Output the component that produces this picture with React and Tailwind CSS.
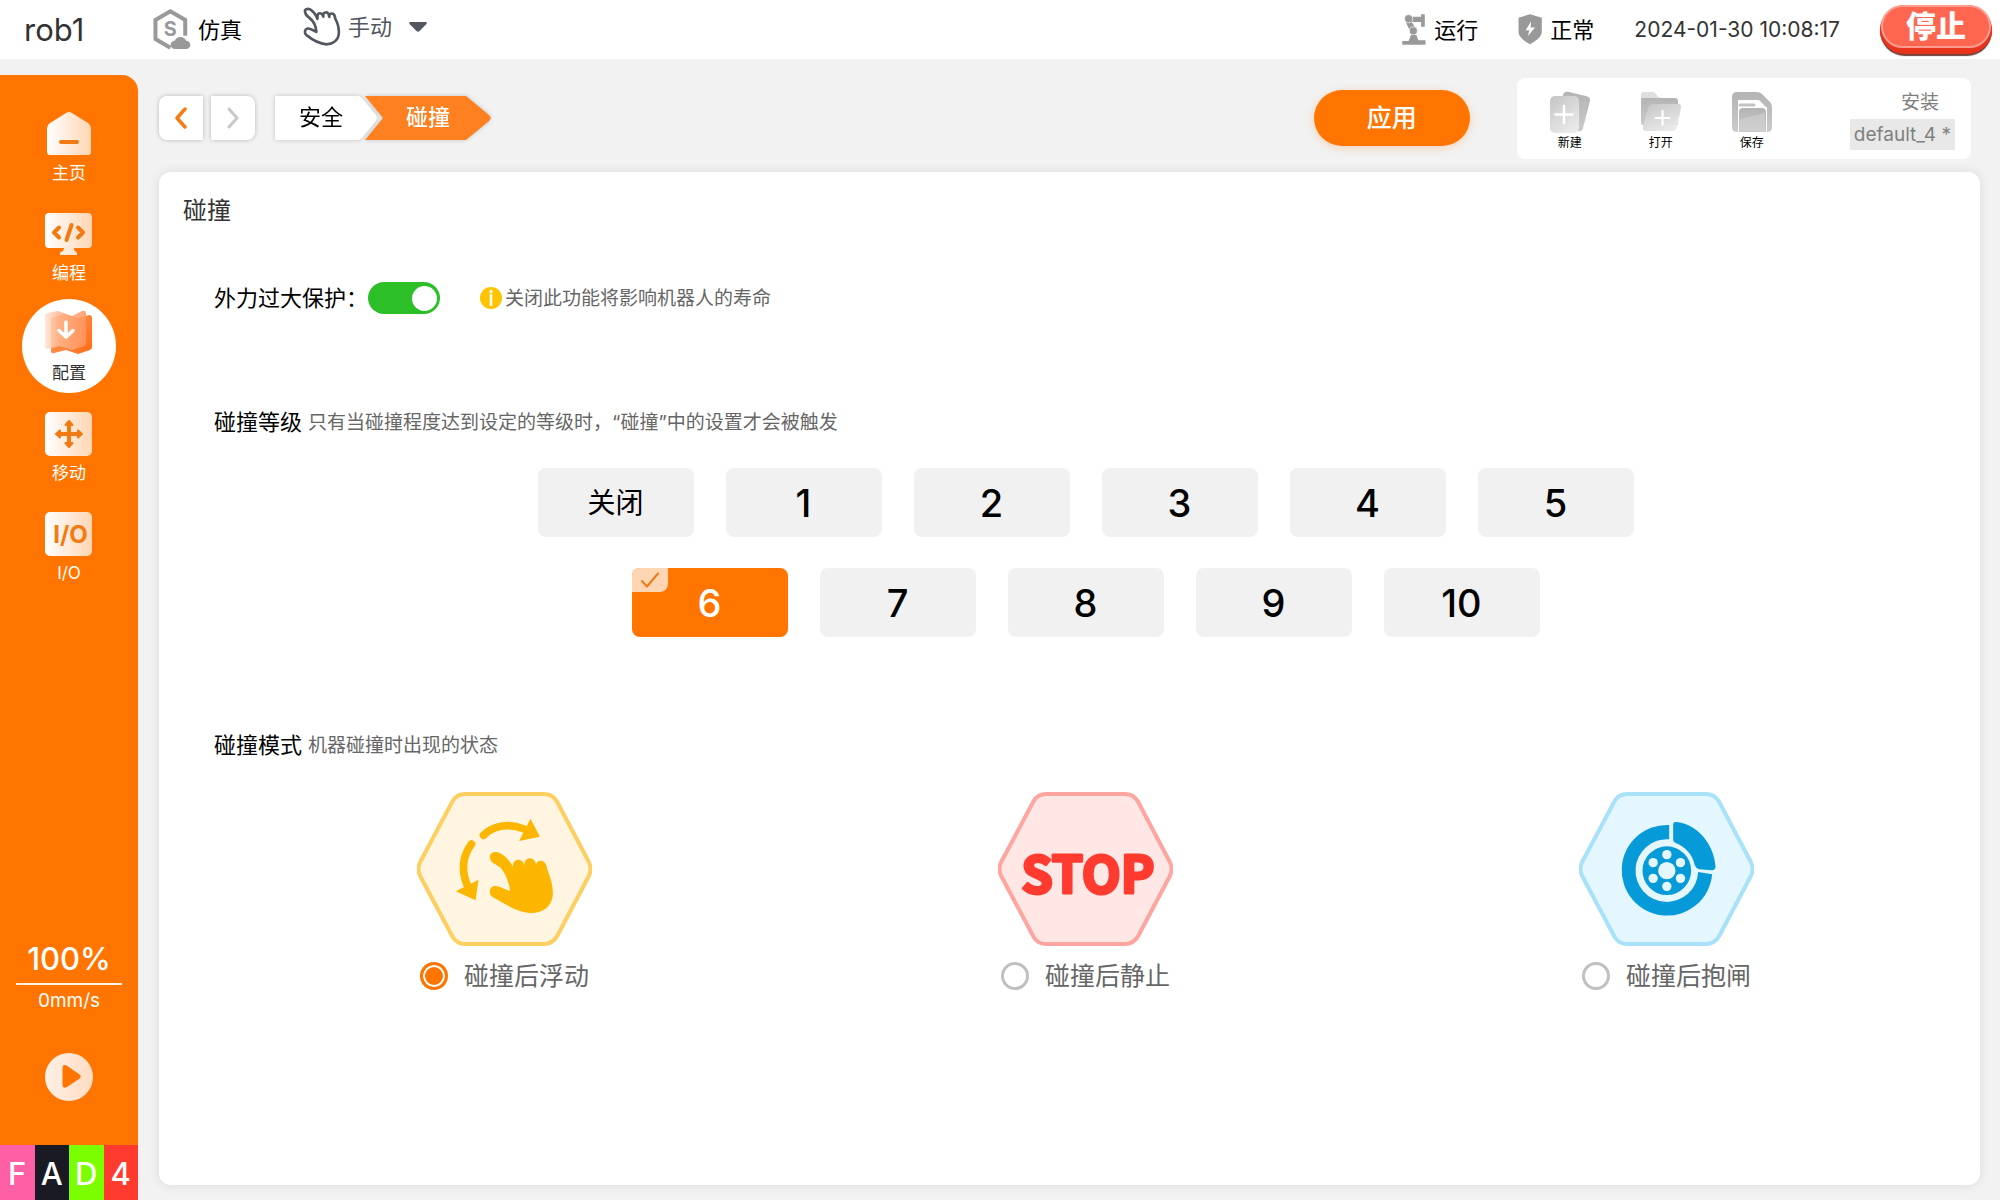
import React, { useState } from "react";

const FONT = "font-['Inter','Noto_Sans_CJK_SC',sans-serif]";

function SimIcon() {
  return (
    <svg viewBox="455 24 120 130" className="h-[43px] w-10" aria-hidden="true">
      <path d="M510 144 L465 118 V60 L510 34 L555 60 V108" fill="none" stroke="#999" strokeWidth="12" />
      <text x="510" y="108" textAnchor="middle" fontSize="60" fontWeight="700" fill="#999">S</text>
      <path d="M524 148 a12 12 0 0 1 -1 -25 a19 19 0 0 1 35 0 a12.500 12.500 0 0 1 0 25Z" fill="#999" />
    </svg>
  );
}

function HandIcon() {
  return (
    <svg viewBox="905 18 120 124" className="h-[41px] w-10" aria-hidden="true">
      <path
        d="M914 37 C911 28 922 24 930 29 C941 36 947 46 951 57 C952 47 950 41 957 40 C965 39 967 44 969 50 C968 41 971 37 978 37 C985 38 986 43 987 51 C987 43 990 40 996 41 C1003 42 1004 48 1005 56 C1012 68 1016 86 1016 98 C1016 120 999 134 978 134 C957 132 933 118 918 106 C910 99 913 88 921 86 C931 85 938 92 948 96 C947 78 937 62 927 54 C919 49 915 44 914 37Z"
        fill="none"
        stroke="#52565e"
        strokeWidth="8"
        strokeLinejoin="round"
      />
    </svg>
  );
}

function RobotIcon() {
  return (
    <svg viewBox="36 44 70 92" className="h-[31px] w-6" fill="#999" aria-hidden="true">
      <path d="M62 52 H92 V45 H103 V82 H92 V68 H62Z" />
      <path d="M46 68 L62 64 L77 88 L73 108 L62 100Z" />
      <circle cx="55" cy="58" r="12" stroke="#fff" strokeWidth="2" />
      <circle cx="69" cy="94" r="12" stroke="#fff" strokeWidth="2" />
      <path d="M62 106 H78 L84 122 H105 V135 H36 V124 H55Z" />
    </svg>
  );
}

function ShieldIcon() {
  return (
    <svg viewBox="377 44 70 92" className="h-[31px] w-6" aria-hidden="true">
      <path d="M412 45 L447 55 V96 C447 114 428 124 412 134 C396 124 378 114 378 96 V55Z" fill="#999" />
      <path d="M415 66 L399 92 H410 L406 109 L427 84 H414Z" fill="#fff" />
    </svg>
  );
}

function Glow({ id, from = "#ffffff", to = "#ffd6b3" }) {
  return (
    <defs>
      <linearGradient id={id} x1="0" x2="1" y1="0" y2="0">
        <stop offset="0" stopColor={from} />
        <stop offset="1" stopColor={to} />
      </linearGradient>
    </defs>
  );
}

function HomeIcon() {
  return (
    <svg viewBox="0 0 48 48" className="size-12">
      <Glow id="g-home" />
      <path d="M21 4 Q24 2 27 4 L43 14 Q46 16 46 19 V43 Q46 46 43 46 H5 Q2 46 2 43 V19 Q2 16 5 14Z" fill="url(#g-home)" />
      <path d="M16 33 H32" stroke="#f27a12" strokeWidth="4" strokeLinecap="round" />
    </svg>
  );
}

function CodeIcon() {
  return (
    <svg viewBox="0 0 48 48" className="size-12">
      <Glow id="g-code" />
      <path d="M4 4 H42 Q47 4 47 8 V35 Q47 39 43 39 H29 Q29 42 32 43.500 V46 H15 V43.500 Q19 42 19 39 H4 Q0 39 0 35 V8 Q0 4 4 4Z" fill="url(#g-code)" />
      <path d="M14 18.500 L9 23.500 L14 28.500 M33 18.500 L38 23.500 L33 28.500 M26.500 16 L21.500 31" fill="none" stroke="#f27a12" strokeWidth="4" strokeLinecap="round" strokeLinejoin="round" />
    </svg>
  );
}

function ConfigIcon() {
  return (
    <svg viewBox="1 0 48 48" className="size-12">
      <defs>
        <linearGradient id="g-cfg" x1="0" x2="1" y1="0.3" y2="1">
          <stop offset="0" stopColor="#ff9a5e" />
          <stop offset="1" stopColor="#ff6a14" />
        </linearGradient>
        <linearGradient id="g-cfg2" x1="0" x2="1" y1="0" y2="0">
          <stop offset="0" stopColor="#ffe3d2" />
          <stop offset="0.350" stopColor="#ffb58c" />
          <stop offset="1" stopColor="#ff9560" />
        </linearGradient>
      </defs>
      <path d="M7 9 L20 5 L34 9 L45 6 Q48 6 48 9 V38 Q48 40 46 41 L34 45 L22 41 L10 44 Q7 45 7 42Z" fill="url(#g-cfg)" />
      <path d="M1 7 Q1 4 4 4 L14 2 L28 7 L38 2 Q42 1 42 5 V34 Q42 36 40 37 L28 41 L15 37 L4 40 Q1 40 1 37Z" fill="url(#g-cfg2)" opacity="0.850" />
      <path d="M22 13 V27 M15 21.500 L22 28 L29 21.500" fill="none" stroke="#fff" strokeWidth="3.500" strokeLinecap="round" strokeLinejoin="round" />
    </svg>
  );
}

function MoveIcon() {
  return (
    <svg viewBox="1 -1 48 48" className="size-12">
      <Glow id="g-move" />
      <rect x="1" y="2" width="47" height="44" rx="5" fill="url(#g-move)" />
      <g stroke="#f27a12" fill="#f27a12" strokeLinejoin="round">
        <path d="M15 24 H34 M25 14.500 V33.500" strokeWidth="4" />
        <path d="M25 11 L21.500 15 H28.500Z M25 37 L21.500 33 H28.500Z M12 24 L16 20.500 V27.500Z M38 24 L34 20.500 V27.500Z" strokeWidth="2" />
      </g>
    </svg>
  );
}

function IoIcon() {
  return (
    <svg viewBox="1 -1 48 48" className="size-12">
      <Glow id="g-io" />
      <rect x="1" y="2" width="47" height="44" rx="5" fill="url(#g-io)" />
      <text x="26.500" y="33" textAnchor="middle" fontSize="24" fontWeight="700" fill="#f27a12">I/O</text>
    </svg>
  );
}

const NAV = [
  { label: "主页", Icon: HomeIcon },
  { label: "编程", Icon: CodeIcon },
  { label: "配置", Icon: ConfigIcon, active: true },
  { label: "移动", Icon: MoveIcon },
  { label: "I/O", Icon: IoIcon },
];

function Header() {
  return (
    <header className="flex h-[59px] shrink-0 items-center bg-white pl-6 pr-2">
      <h1 className="w-32 text-[31px] leading-10 text-[#333]">rob1</h1>
      <div className="flex w-[150px] items-center gap-1.5 text-[22px] leading-8 text-black">
        <SimIcon />
        <span>仿真</span>
      </div>
      <button type="button" className="flex items-center gap-1.5 pb-1.5 text-[22px] leading-8 text-[#52565e]">
        <HandIcon />
        <span>手动</span>
        <svg viewBox="0 0 19 12" className="ml-2.5 h-3 w-5" aria-hidden="true">
          <path d="M2 1 H17 Q19 1 18 3 L11 10 Q9.500 11.500 8 10 L1 3 Q0 1 2 1Z" fill="#52565e" />
        </svg>
      </button>
      <div className="ml-auto flex items-center text-[22px] leading-8 text-black">
        <div className="mr-10 flex items-center gap-2">
          <RobotIcon />
          <span>运行</span>
        </div>
        <div className="mr-10 flex items-center gap-2">
          <ShieldIcon />
          <span>正常</span>
        </div>
        <time className="mr-10 text-[21px] text-[#333]">2024-01-30 10:08:17</time>
        <button type="button" className="h-[50px] rounded-[25px] border-b border-[#7a4038] bg-[#e8341c] px-px pb-1.5 shadow-[0_1px_1px_#66403a]">
          <span className="flex h-[43px] w-[110px] items-center justify-center rounded-[22px] border-2 border-[#ff9c92] bg-[#ff6650] text-[30px] font-black leading-none text-white">
            停止
          </span>
        </button>
      </div>
    </header>
  );
}

function Sidebar() {
  return (
    <aside className="flex w-[138px] shrink-0 flex-col rounded-tr-2xl bg-[#ff7500]">
      <nav className="flex flex-col items-center gap-1.5 pt-6">
        {NAV.map(({ label, Icon, active }) => (
          <a
            key={label}
            href="#"
            aria-current={active ? "page" : undefined}
            className={
              active
                ? "flex size-[94px] flex-col items-center rounded-full bg-white pt-2.5 text-[17px] leading-8 text-[#333]"
                : "flex size-[94px] flex-col items-center rounded-full pt-2.5 text-[17px] leading-8 text-white"
            }
          >
            <Icon />
            {label}
          </a>
        ))}
      </nav>
      <div className="mx-4 mt-auto border-b-2 border-white/90 pb-1 text-center text-[31px] font-medium leading-10 text-white">100%</div>
      <div className="text-center text-[19px] leading-8 text-white">0mm/s</div>
      <button type="button" aria-label="运行程序" className="mx-auto mb-11 mt-9 size-12">
        <svg viewBox="0 0 48 48" className="size-12">
          <Glow id="g-play" from="#fff0e6" to="#ffdcc2" />
          <circle cx="24" cy="24" r="24" fill="url(#g-play)" />
          <path d="M17.500 15 Q17.500 11 21.500 12.500 L34 21 Q37.500 23.500 34 26 L22 34 Q17.500 36 17.500 32Z" fill="#ff7500" />
        </svg>
      </button>
      <div className="flex h-[55px] text-center text-[31px] font-medium leading-[58px] text-white">
        <span className="flex-1 bg-[#ff5fa5]">F</span>
        <span className="flex-1 bg-[#1a1a24]">A</span>
        <span className="flex-1 bg-[#7bff00]">D</span>
        <span className="flex-1 bg-[#ff3b30]">4</span>
      </div>
    </aside>
  );
}

function ToolbarGradients() {
  return (
    <defs>
      <linearGradient id="g-front" x1="0" x2="0.6" y1="0" y2="1">
        <stop offset="0" stopColor="#c4c4c4" />
        <stop offset="1" stopColor="#e9e9e9" />
      </linearGradient>
      <linearGradient id="g-back" x1="0" x2="0" y1="0" y2="1">
        <stop offset="0" stopColor="#b4b4b4" />
        <stop offset="1" stopColor="#cacaca" />
      </linearGradient>
    </defs>
  );
}

function NewIcon() {
  return (
    <svg viewBox="0 0 42 42" className="size-[42px]">
      <ToolbarGradients />
      <path d="M14 4 Q15 0 20 1 L37 5 Q42 6 41 10 L34 37 Q33 41 28 40 H14Z" fill="url(#g-back)" />
      <rect x="1" y="5" width="29" height="37" rx="5" fill="url(#g-front)" />
      <path d="M6.500 23.500 H23.500 M15 15 V32" stroke="#fff" strokeWidth="2.500" strokeLinecap="round" />
    </svg>
  );
}

function OpenIcon() {
  return (
    <svg viewBox="0 0 42 42" className="size-[42px]">
      <path d="M1 4 Q1 1 4 1 H13 Q15 1 16 3 L18 6 H20 V12 H1Z" fill="#dedede" />
      <path d="M1 8 Q1 7 3 7 H35 Q38 7 38 10 V34 H5 Q1 35 1 31Z" fill="url(#g-back)" />
      <path d="M8 17 Q9 13 13 13 H38 Q42 13 41 17 L37 36 Q36 40 32 40 H6 Q2 40 3 36Z" fill="url(#g-front)" />
      <path d="M15.500 27 H29.500 M22.500 20 V34" stroke="#fff" strokeWidth="2.200" strokeLinecap="round" />
    </svg>
  );
}

function SaveIcon() {
  return (
    <svg viewBox="0 0 42 42" className="size-[42px]">
      <path d="M1 6 Q1 1 6 1 H26 Q29 1 31 3 L39 11 Q41 13 41 16 V36 Q41 41 36 41 H6 Q1 41 1 36Z" fill="url(#g-back)" />
      <path d="M7 41 V9 H28 L36 17 V41Z" fill="#fff" />
      <path d="M9 14 H23" stroke="#c4c4c4" strokeWidth="3" strokeLinecap="round" />
      <path d="M8 21 Q8 17 12 17 H31 Q35 17 35 21 V41 H8Z" fill="url(#g-back)" />
      <path d="M9 40 V28 L34 22 V40Z" fill="#d6d6d6" opacity="0.500" />
    </svg>
  );
}

const TOOLS = [
  { label: "新建", Icon: NewIcon },
  { label: "打开", Icon: OpenIcon },
  { label: "保存", Icon: SaveIcon },
];

function TopBar() {
  return (
    <div className="flex h-24 items-center pb-2.5 pr-[9px]">
      <div className="flex gap-2">
        <button type="button" aria-label="后退" className="flex h-11 w-11 items-center justify-center rounded-l-lg bg-white shadow-[0_0_4px_rgba(0,0,0,0.25)]">
          <svg viewBox="0 0 14 22" className="h-[22px] w-3.5"><path d="M11 2 L3 11 L11 20" fill="none" stroke="#f57c14" strokeWidth="3.500" strokeLinecap="round" strokeLinejoin="round" /></svg>
        </button>
        <button type="button" aria-label="前进" className="flex h-11 w-11 items-center justify-center rounded-r-lg bg-white shadow-[0_0_4px_rgba(0,0,0,0.25)]">
          <svg viewBox="0 0 14 22" className="h-[22px] w-3.5"><path d="M3 2 L11 11 L3 20" fill="none" stroke="#c8c8c8" strokeWidth="3" strokeLinecap="round" strokeLinejoin="round" /></svg>
        </button>
      </div>
      <nav aria-label="位置" className="ml-5 flex text-[22px] leading-[42px] drop-shadow-[0_0_2px_rgba(0,0,0,0.2)]">
        <a href="#" className="h-11 w-[102px] bg-white pl-6 text-black [clip-path:polygon(0_0,84px_0,87px_2px,101px_19px,102px_22px,101px_25px,87px_42px,84px_44px,0_44px)]">安全</a>
        <a href="#" aria-current="page" className="-ml-3 h-11 w-[126px] bg-[#ff8020] text-center font-medium text-white [clip-path:polygon(0_0,101px_0,124px_19px,126px_22px,124px_25px,101px_44px,0_44px,18px_22px)]">碰撞</a>
      </nav>
      <button type="button" className="ml-auto h-14 w-[156px] rounded-full bg-[#ff7500] text-[25px] font-medium leading-none text-white shadow-[0_2px_8px_rgba(255,117,0,0.25)]">应用</button>
      <div className="ml-[47px] flex h-[81px] items-center rounded-lg bg-white pl-8 pr-4">
        <div className="flex gap-[49px] pt-2">
          {TOOLS.map(({ label, Icon }) => (
            <button key={label} type="button" className="flex flex-col items-center text-[12px] leading-5 text-black">
              <Icon />
              {label}
            </button>
          ))}
        </div>
        <div className="ml-[77px] flex flex-col items-end text-[19px] text-[#808080]">
          <span className="pr-4 leading-8">安装</span>
          <span className="bg-[#e8e8e8] px-1 leading-[31px]">default_4 *</span>
        </div>
      </div>
    </div>
  );
}

const HEX = "M225 72 H462 Q486 72 500 94 L596 276 Q606 297 596 318 L500 500 Q486 522 462 522 H225 Q200 522 187 500 L90 318 Q80 297 90 276 L187 94 Q200 72 225 72Z";

function FloatArt() {
  return (
    <svg viewBox="81 66 524 462" className="h-[154px] w-[175px]">
      <path d={HEX} fill="#fff5e0" stroke="#fccf60" strokeWidth="12" />
      <g fill="none" stroke="#fdb600" strokeWidth="23" strokeLinecap="round">
        <path d="M280 196 C312 164 360 160 402 177" />
        <path d="M244 222 C216 260 214 305 232 348" />
      </g>
      <path d="M421 146 L449 200 L387 213Z M197 364 L265 329 L256 391Z" fill="#fdb600" />
      <path
        d="M301 269 C294 253 308 243 323 247 C345 255 358 272 369 291 C366 276 376 269 386 269 C396 270 402 279 403 288 C401 272 410 265 420 265 C432 266 437 276 438 286 C438 276 446 271 456 273 C467 276 470 288 472 300 C480 321 489 345 488 374 C485 409 458 430 421 429 C382 428 340 399 307 381 C294 372 297 351 312 348 C327 346 342 358 360 363 C357 338 347 312 331 293 C320 283 306 281 301 269Z"
        fill="#fdb600"
      />
    </svg>
  );
}

function StopArt() {
  return (
    <svg viewBox="81 66 524 462" className="h-[154px] w-[175px]">
      <path d={HEX} fill="#ffe7e5" stroke="#ffa5a0" strokeWidth="12" />
      <text
        x="350"
        y="369"
        textAnchor="middle"
        fontSize="152"
        fontWeight="700"
        fill="#ff3b30"
        stroke="#ff3b30"
        strokeWidth="9"
        strokeLinejoin="round"
        className="font-['Noto_Sans_CJK_SC',sans-serif]"
      >
        STOP
      </text>
    </svg>
  );
}

const HOLES = [[347, 254], [388, 278], [388, 325], [347, 349], [306, 325], [306, 278]];

function BrakeArt() {
  return (
    <svg viewBox="84 66 524 462" className="h-[154px] w-[175px]">
      <path d={HEX} transform="translate(3 0)" fill="#e5f7fe" stroke="#a8e1f8" strokeWidth="12" />
      <path d="M354 165 A136 136 0 1 0 483 313 L441 306 A94 94 0 1 1 354 208Z" fill="#079ad9" />
      <path d="M366 163 Q366 155 375 156 C437 162 488 220 493 289 Q493 301 482 301 L444 298 Q435 296 431 286 C424 254 403 231 375 220 Q366 216 366 207Z" fill="#079ad9" />
      <circle cx="347" cy="302" r="73" fill="#079ad9" />
      <circle cx="347" cy="302" r="26" fill="#e5f7fe" />
      {HOLES.map(([x, y]) => (
        <circle key={`${x}-${y}`} cx={x} cy={y} r="14" fill="#e5f7fe" />
      ))}
    </svg>
  );
}

const MODES = [
  { id: "float", label: "碰撞后浮动", Art: FloatArt },
  { id: "still", label: "碰撞后静止", Art: StopArt },
  { id: "brake", label: "碰撞后抱闸", Art: BrakeArt },
];

function LevelButton({ value, selected, onSelect }) {
  const size = value === "关闭" ? "text-[28px]" : "text-[38px] font-medium";
  return (
    <button
      type="button"
      aria-pressed={selected}
      onClick={() => onSelect(value)}
      className={`relative h-[69px] w-[156px] overflow-hidden rounded-lg leading-none ${size} ${selected ? "bg-[#ff7500] text-white" : "bg-[#f1f1f1] text-black"}`}
    >
      {selected && (
        <span className="absolute left-0 top-0 flex h-6 w-9 items-center justify-center rounded-br-lg bg-[#ffd5b3]">
          <svg viewBox="0 0 18 16" className="h-4 w-[18px]"><path d="M1 9 L6 14.500 L17 1.500" fill="none" stroke="#f27a12" strokeWidth="2" strokeLinecap="round" strokeLinejoin="round" /></svg>
        </span>
      )}
      {value}
    </button>
  );
}

export default function App() {
  const [level, setLevel] = useState("6");
  const [mode, setMode] = useState("float");
  const [guard, setGuard] = useState(true);

  return (
    <div className={`flex min-h-screen flex-col bg-[#f2f2f2] ${FONT}`} lang="zh-CN">
      <Header />
      <div className="flex flex-1 pt-4">
        <Sidebar />
        <main className="flex min-w-0 flex-1 flex-col pb-[15px] pl-[21px] pr-5">
          <TopBar />
          <section className="mt-px flex-1 rounded-xl bg-white pl-6 pr-[23px] pt-[21px] shadow-[0_0_12px_rgba(0,0,0,0.1)]">
            <h2 className="text-[24px] leading-9 text-[#333]">碰撞</h2>
            <div className="pl-[31px]">
              <div className="mt-[49px] flex h-10 items-center">
                <label htmlFor="guard" className="text-[22px] text-black">外力过大保护：</label>
                <input
                  id="guard"
                  type="checkbox"
                  role="switch"
                  checked={guard}
                  onChange={(e) => setGuard(e.target.checked)}
                  className="flex h-8 w-[72px] appearance-none items-center rounded-full bg-gray-300 px-[3px] before:size-[25px] before:rounded-full before:bg-white checked:justify-end checked:bg-[#2dbf28]"
                />
                <svg viewBox="0 0 22 22" className="ml-10 size-[22px]" aria-hidden="true">
                  <circle cx="11" cy="11" r="11" fill="#ffc300" />
                  <circle cx="11" cy="4.500" r="1.700" fill="#fff" />
                  <path d="M11 8 V18" stroke="#fff" strokeWidth="2.600" strokeLinecap="round" />
                </svg>
                <p className="ml-[3px] pt-0.5 text-[19px] text-[#666]">关闭此功能将影响机器人的寿命</p>
              </div>

              <div className="mt-[84px] flex h-10 items-center gap-1.5">
                <h3 className="text-[22px] text-black">碰撞等级</h3>
                <p className="pt-0.5 text-[19px] text-[#666]">只有当碰撞程度达到设定的等级时，“碰撞”中的设置才会被触发</p>
              </div>
              <div className="mt-[26px] flex justify-center gap-8">
                {["关闭", "1", "2", "3", "4", "5"].map((v) => (
                  <LevelButton key={v} value={v} selected={v === level} onSelect={setLevel} />
                ))}
              </div>
              <div className="mt-[31px] flex justify-center gap-8">
                {["6", "7", "8", "9", "10"].map((v) => (
                  <LevelButton key={v} value={v} selected={v === level} onSelect={setLevel} />
                ))}
              </div>

              <div className="mt-[88px] flex h-10 items-center gap-1.5">
                <h3 className="text-[22px] text-black">碰撞模式</h3>
                <p className="pt-0.5 text-[19px] text-[#666]">机器碰撞时出现的状态</p>
              </div>
              <div className="mt-[27px] grid grid-cols-3">
                {MODES.map(({ id, label, Art }) => (
                  <label key={id} htmlFor={id} className="flex flex-col items-center gap-3 text-[25px] leading-9 text-[#666]">
                    <Art />
                    <span className="flex items-center gap-4">
                      <input
                        id={id}
                        type="radio"
                        name="mode"
                        checked={mode === id}
                        onChange={() => setMode(id)}
                        className="size-7 appearance-none rounded-full border-[3px] border-[#c0c0c0] bg-white checked:border-[#ff7500] checked:bg-[#ff7500] checked:shadow-[inset_0_0_0_2px_#fff]"
                      />
                      {label}
                    </span>
                  </label>
                ))}
              </div>
            </div>
          </section>
        </main>
      </div>
    </div>
  );
}
